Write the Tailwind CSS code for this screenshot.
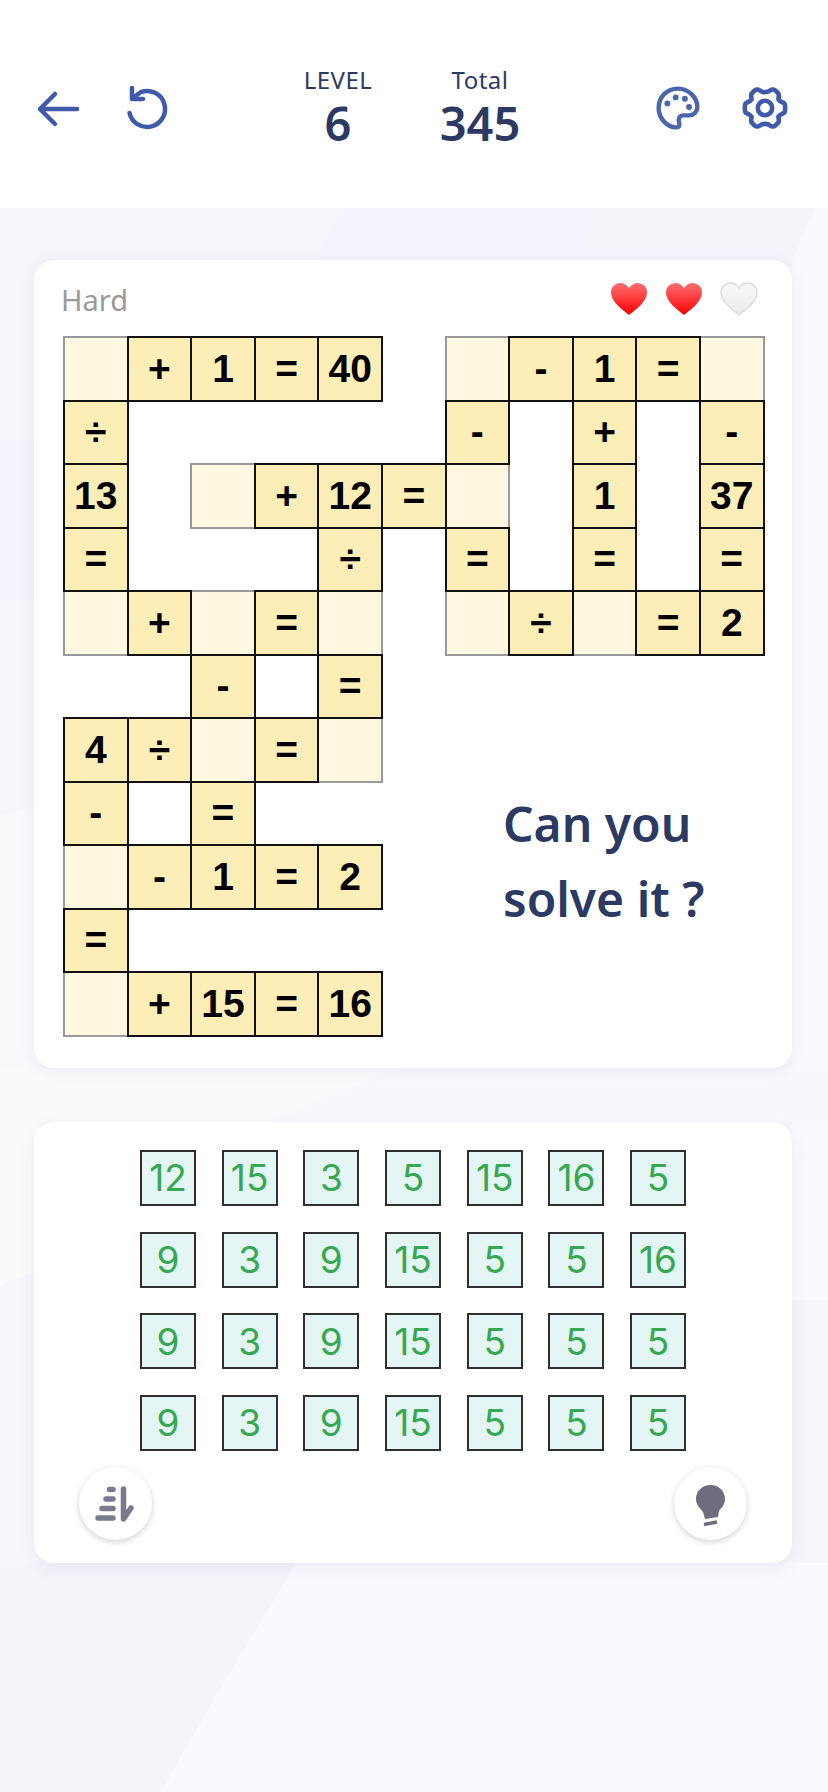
<!DOCTYPE html>
<html lang="en">

<head>
    <meta charset="UTF-8">
    <meta name="viewport" content="width=device-width, initial-scale=1.0">
    <title>Math Crossword</title>
    <script src="https://cdn.jsdelivr.net/npm/@tailwindcss/browser@4"></script>
</head>

<body class="bg-[#f5f5fa]">
    <div class="relative w-[828px] h-[1792px] overflow-hidden font-['Noto_Sans',sans-serif]">
        <!-- faint background shapes -->
        <svg class="absolute inset-0" width="828" height="1792" viewBox="0 0 828 1792" fill="none">
            <path d="M345 208 H828 V280 H310 Z" fill="#f4f5fb" />
            <path d="M345 208 H590 L570 270 H310 Z" fill="#f3f4fd" />
            <path d="M815 208 H828 V1300 H792 V260 Z" fill="#f9f9fd" />
            <path d="M0 440 H40 V600 H0 Z" fill="#f3f3fd" />
            <path d="M0 815 L40 805 V1070 L0 1080 Z" fill="#f9f9fc" />
            <path d="M0 1068 H828 V1122 H0 Z" fill="#f7f7fc" />
            <path d="M0 1068 H400 L270 1122 H40 V1270 L0 1285 Z" fill="#fafafc" />
            <path d="M0 1285 L40 1270 V1580 H0 Z" fill="#f6f6fb" />
            <path d="M0 1563 H296 C250 1640 200 1720 161 1792 H0 Z" fill="#f4f5fa" />
            <path d="M296 1563 H828 V1792 H161 C200 1720 250 1640 296 1563 Z" fill="#f9fafe" />
        </svg>

        <header class="relative flex items-start bg-white h-[208px]">
            <svg class="ml-[34px] mt-[88px]" width="48" height="42" viewBox="0 0 48 42" fill="none" stroke="#3f5aa8" stroke-width="4.5" stroke-linecap="round" stroke-linejoin="round">
                <path d="M6 21 H43 M21 6 L6 21 L21 36" />
            </svg>
            <svg class="ml-[40px] mt-[84px]" width="50" height="50" viewBox="0 0 50 50" fill="none" stroke="#3f5aa8" stroke-width="4.5" stroke-linecap="round" stroke-linejoin="round">
                <path d="M7.500 29 A18 18 0 1 0 19 8 L12 13 M10 4 V15 H21" />
            </svg>
            <div class="ml-[106px] mt-[63px] w-[120px] text-center text-[#2c3a63]">
                <div class="text-[24px] leading-[34px] tracking-[0.5px]">LEVEL</div>
                <div class="text-[47px] leading-[52px] font-semibold">6</div>
            </div>
            <div class="ml-[22px] mt-[63px] w-[120px] text-center text-[#2c3a63]">
                <div class="text-[24px] leading-[34px] tracking-[0.5px]">Total</div>
                <div class="text-[47px] leading-[52px] font-semibold">345</div>
            </div>
            <svg class="ml-[114px] mt-[84px]" width="48" height="48" viewBox="0 0 52 52" fill="none" stroke="#4a66ad" stroke-width="4.8" stroke-linecap="round" stroke-linejoin="round">
                <path d="M26 5 C14 5 5 14 5 26 C5 37 14 47 24 47 C28 47 28 44 27 41 C26 37 28 34 32 34 H38 C43 34 47 30 47 25 C47 14 37 5 26 5 Z" />
                <g fill="#4a66ad" stroke="none">
                    <circle cx="14.5" cy="21" r="3.2" />
                    <circle cx="23.5" cy="14.5" r="3.2" />
                    <circle cx="33.5" cy="16" r="3.2" />
                    <circle cx="38" cy="25" r="3.2" />
                </g>
            </svg>
            <svg class="ml-[39px] mt-[84px]" width="48" height="48" viewBox="0 0 50 50" fill="none" stroke="#3f5aa8" stroke-width="4.8" stroke-linecap="round" stroke-linejoin="round">
                <path d="M20 7 C22 9 28 9 30 7 C32 5 35 6 36 7 L39 10 C40 12 39 14 39 16 C40 18 43 19 45 20 C46 21 46 22 46 25 C46 28 46 29 45 30 C43 31 40 32 39 34 C39 36 40 38 39 40 L36 43 C35 44 32 45 30 43 C28 41 22 41 20 43 C18 45 15 44 14 43 L11 40 C10 38 11 36 11 34 C10 32 7 31 5 30 C4 29 4 28 4 25 C4 22 4 21 5 20 C7 19 10 18 11 16 C11 14 10 12 11 10 L14 7 C15 6 18 5 20 7 Z" />
                <circle cx="25" cy="25" r="7.5" />
            </svg>
        </header>

        <main class="relative pl-[34px] pr-[36px]">
            <section class="mt-[52px] h-[808px] rounded-[20px] bg-white shadow-[0_2px_16px_rgba(60,60,110,0.07)] pl-[30px] relative">
                <div class="flex items-center justify-between h-[77px] pr-[34px]">
                    <span class="mt-[3px] -ml-[3px] text-[29px] text-[#9a9a9a]">Hard</span>
                    <div class="flex gap-[17px]">
                        <svg width="38" height="34" viewBox="0 0 38 34">
                            <defs>
                                <linearGradient id="red" x1="0" y1="0" x2="0" y2="1">
                                    <stop offset="0" stop-color="#ff6f72" />
                                    <stop offset="1" stop-color="#fb0000" />
                                </linearGradient>
                                <linearGradient id="grey" x1="0" y1="0" x2="0" y2="1">
                                    <stop offset="0" stop-color="#f7f7f7" />
                                    <stop offset="1" stop-color="#ececec" />
                                </linearGradient>
                            </defs>
                            <path d="M19 33 C13 28 1 20 1 10.5 C1 4.5 5.500 1 10.500 1 C14 1 17 3 19 6 C21 3 24 1 27.500 1 C32.500 1 37 4.500 37 10.500 C37 20 25 28 19 33 Z" fill="url(#red)" />
                        </svg>
                        <svg width="38" height="34" viewBox="0 0 38 34">
                            <path d="M19 33 C13 28 1 20 1 10.5 C1 4.5 5.500 1 10.500 1 C14 1 17 3 19 6 C21 3 24 1 27.500 1 C32.500 1 37 4.500 37 10.500 C37 20 25 28 19 33 Z" fill="url(#red)" />
                        </svg>
                        <svg width="38" height="34" viewBox="0 0 38 34">
                            <path d="M19 33 C13 28 1 20 1 10.5 C1 4.5 5.500 1 10.500 1 C14 1 17 3 19 6 C21 3 24 1 27.500 1 C32.500 1 37 4.500 37 10.500 C37 20 25 28 19 33 Z" fill="url(#grey)" stroke="#dddddd" stroke-width="1.5" />
                        </svg>
                    </div>
                </div>
                <div id="board" class="grid grid-cols-[repeat(11,63.6px)] grid-rows-[repeat(11,63.5px)] font-['Liberation_Sans',sans-serif] font-bold text-[39px] text-black"></div>
                <div class="absolute left-[469px] top-[526px] text-[48px] leading-[75px] font-semibold text-[#2c3a63]">Can you<br>solve it ?</div>
            </section>

            <section class="mt-[54px] h-[441px] rounded-[20px] bg-white shadow-[0_6px_18px_rgba(60,60,110,0.07)] pt-[28px]">
                <div id="tiles" class="grid grid-cols-[repeat(7,56px)] justify-center gap-[25.7px] font-['Inter',sans-serif] text-[37px] text-[#36a852]"></div>
                <div class="flex justify-between mt-[15.5px] pl-[44.5px] pr-[45.5px]">
                    <button class="w-[73px] h-[73px] rounded-full bg-white shadow-[0_2px_6px_rgba(0,0,0,0.18)]">
                        <svg width="73" height="73" viewBox="0 0 73 73" fill="none" stroke="#7a7a8e" stroke-width="5.500" stroke-linecap="round" stroke-linejoin="round">
                            <path d="M30.500 22.500 H34 M27 32 H34 M23 41.500 H34 M19 51 H34 M44.500 22 V52 L52 41" />
                        </svg>
                    </button>
                    <button class="w-[73px] h-[73px] rounded-full bg-white shadow-[0_2px_6px_rgba(0,0,0,0.18)]">
                        <svg width="73" height="73" viewBox="0 0 73 73">
                            <path d="M36.500 18 C44.500 18 51 24 51 32 C51 38 47 41 45 44 L44 50 L31 52 L29 45 C26 41 22 38 22 32 C22 24 28.500 18 36.500 18 Z" fill="#6d6d7e" />
                            <path d="M30 57.500 L43 55" stroke="#6d6d7e" stroke-width="3.500" />
                        </svg>
                    </button>
                </div>
            </section>
        </main>
    </div>

    <script>
        // "_" = empty space, "." = cell to fill in
        const rows = [
            ['.', '+', '1', '=', '40', '_', '.', '-', '1', '=', '.'],
            ['÷', '_', '_', '_', '_', '_', '-', '_', '+', '_', '-'],
            ['13', '_', '.', '+', '12', '=', '.', '_', '1', '_', '37'],
            ['=', '_', '_', '_', '÷', '_', '=', '_', '=', '_', '='],
            ['.', '+', '.', '=', '.', '_', '.', '÷', '.', '=', '2'],
            ['_', '_', '-', '_', '=', '_', '_', '_', '_', '_', '_'],
            ['4', '÷', '.', '=', '.', '_', '_', '_', '_', '_', '_'],
            ['-', '_', '=', '_', '_', '_', '_', '_', '_', '_', '_'],
            ['.', '-', '1', '=', '2', '_', '_', '_', '_', '_', '_'],
            ['=', '_', '_', '_', '_', '_', '_', '_', '_', '_', '_'],
            ['.', '+', '15', '=', '16', '_', '_', '_', '_', '_', '_']
        ];
        const tiles = [12, 15, 3, 5, 15, 16, 5, 9, 3, 9, 15, 5, 5, 16, 9, 3, 9, 15, 5, 5, 5, 9, 3, 9, 15, 5, 5, 5];

        const board = document.getElementById('board');
        rows.flat().forEach(value => {
            const cell = document.createElement('div');
            if (value === '.') {
                cell.className = '-m-px border-2 border-[#9a9a9a] bg-[#fff7e0]';
            } else if (value !== '_') {
                cell.className = '-m-px z-10 flex items-center justify-center border-2 border-[#111] bg-[#fdeeb8]';
                cell.textContent = value;
            }
            board.appendChild(cell);
        });

        const tileGrid = document.getElementById('tiles');
        tiles.forEach(value => {
            const tile = document.createElement('div');
            tile.className = 'flex items-center justify-center h-[56px] border-2 border-[#2f2f2f] bg-[#e3f6f3]';
            tile.textContent = value;
            tileGrid.appendChild(tile);
        });
    </script>
</body>

</html>
